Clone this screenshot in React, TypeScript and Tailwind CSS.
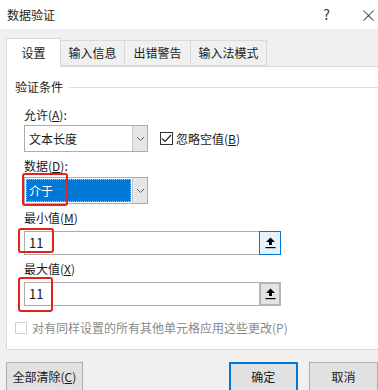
const font = { fontFamily: '"Noto Sans CJK SC", "Noto Sans", sans-serif' };

function Chevron() {
  return (
    <svg width="9" height="6" viewBox="0 0 9 6">
      <path d="M1 1 L4.5 4.5 L8 1" fill="none" stroke="#606060" strokeWidth="1" />
    </svg>
  );
}

function CollapseIcon() {
  return (
    <svg width="11" height="12" viewBox="0 0 11 12">
      <path d="M5.5 0.5 L10 5 L7 5 L7 8 L4 8 L4 5 L1 5 Z" fill="#000" />
      <rect x="0.5" y="10" width="10" height="1.2" fill="#000" />
    </svg>
  );
}

function Select({ value, active }: { value: string; active?: boolean }) {
  return (
    <div className="flex h-[27px] w-[124px] border border-[#adadad] bg-white">
      <div className="flex flex-1 items-center p-[1px]">
        {active ? (
          <div className="flex h-full w-full items-center border border-dotted border-[#99c9ef] bg-[#0078d7] pl-[2px] text-white">
            {value}
          </div>
        ) : (
          <span className="pl-[3px] text-[#1a1a1a]">{value}</span>
        )}
      </div>
      <div className="flex w-[15px] items-center justify-center border-l border-[#c8c8c8] bg-[#e6e6e6]">
        <Chevron />
      </div>
    </div>
  );
}

function RefInput({ focused, mark }: { focused?: boolean; mark: string }) {
  return (
    <div className="relative flex h-[24px] w-[257px] border border-[#adadad] bg-white">
      <div className="flex flex-1 items-center pl-[4px] text-[13px] text-[#1a1a1a]">11</div>
      {focused ? (
        <div className="my-[-1px] mr-[-1px] flex w-[22px] items-center justify-center border border-[#0078d7] bg-[#e5f1fb]">
          <CollapseIcon />
        </div>
      ) : (
        <div className="my-[-1px] mr-[-1px] flex w-[22px] items-center justify-center border-2 border-[#b4b4b4] bg-[#e3e3e3]">
          <CollapseIcon />
        </div>
      )}
      <div className={mark} />
    </div>
  );
}

export default function App() {
  return (
    <div
      className="relative h-[390px] w-[378px] overflow-hidden bg-[#f0f0f0] text-[12px] text-[#1a1a1a]"
      style={font}
    >
      {/* title bar */}
      <div className="flex h-[29px] items-center bg-white pl-[7px] pr-[1px]">
        <span className="text-[12px] text-[#222]">数据验证</span>
        <span className="ml-auto text-[14px] text-[#333]">?</span>
        <span className="ml-[30px] text-[17px] font-light leading-none text-[#333]">×</span>
      </div>

      {/* tabs */}
      <div className="flex items-end pl-[6px] pt-[9px]">
        <div className="z-10 mb-[-1px] flex h-[29px] w-[55px] items-center justify-center border border-b-0 border-[#d9d9d9] bg-white">
          设置
        </div>
        <div className="flex h-[26px] w-[64px] items-center justify-center border border-l-0 border-[#d9d9d9]">
          输入信息
        </div>
        <div className="flex h-[26px] w-[66px] items-center justify-center border border-l-0 border-[#d9d9d9]">
          出错警告
        </div>
        <div className="flex h-[26px] w-[76px] items-center justify-center border border-l-0 border-[#d9d9d9]">
          输入法模式
        </div>
      </div>

      {/* panel */}
      <div className="ml-[6px] flex h-[284px] flex-col border border-r-0 border-[#d9d9d9] bg-white pl-[8px] pt-[12px]">
        <div className="flex h-[16px] items-center">
          <span>验证条件</span>
          <div className="ml-[6px] h-px flex-1 bg-[#dcdcdc]" />
        </div>

        <div className="pl-[9px]">
          <div className="mt-[12px] h-[16px] leading-[16px]">
            允许(<span className="underline">A</span>):
          </div>
          <div className="mt-[2px] flex items-center">
            <Select value="文本长度" />
            <div className="ml-[12px] flex h-[13px] w-[13px] items-center justify-center border border-[#333] bg-white">
              <svg width="11" height="9" viewBox="0 0 11 9">
                <path d="M1 4.5 L4 7.5 L10 1" fill="none" stroke="#222" strokeWidth="1.2" />
              </svg>
            </div>
            <span className="ml-[3px]">
              忽略空值(<span className="underline">B</span>)
            </span>
          </div>

          <div className="mt-[6px] h-[16px] leading-[16px]">
            数据(<span className="underline">D</span>):
          </div>
          <div className="relative mt-[3px] w-[124px]">
            <Select value="介于" active />
            <div className="absolute left-[-2px] top-[-4px] h-[33px] w-[46px] rounded-[3px] border-2 border-[#e0231c]" />
          </div>

          <div className="mt-[6px] h-[16px] leading-[16px]">
            最小值(<span className="underline">M</span>)
          </div>
          <div className="mt-[5px]">
            <RefInput
              focused
              mark="absolute left-[-7px] top-[-4px] h-[25px] w-[36px] rounded-[3px] border-2 border-[#e0231c]"
            />
          </div>

          <div className="mt-[6px] h-[16px] leading-[16px]">
            最大值(<span className="underline">X</span>)
          </div>
          <div className="mt-[5px]">
            <RefInput mark="absolute left-[-7px] top-[-6px] h-[35px] w-[35px] rounded-[3px] border-2 border-[#e0231c]" />
          </div>
        </div>

        <div className="mt-[14px] flex h-[16px] items-center">
          <div className="h-[12px] w-[12px] border border-[#cfcfcf] bg-white" />
          <span className="ml-[5px] text-[#8a8a8a]">对有同样设置的所有其他单元格应用这些更改(P)</span>
        </div>
      </div>

      {/* buttons */}
      <div className="mt-[12px] flex pl-[6px]">
        <div className="flex h-[30px] w-[81px] items-center justify-center border border-[#adadad] bg-[#e1e1e1]">
          全部清除(<span className="underline">C</span>)
        </div>
        <div className="ml-[146px] flex h-[30px] w-[73px] items-center justify-center border-2 border-[#0078d7] bg-[#e1e1e1]">
          确定
        </div>
        <div className="ml-[11px] flex h-[30px] w-[73px] items-center justify-center border border-[#adadad] bg-[#e1e1e1]">
          取消
        </div>
      </div>
    </div>
  );
}
